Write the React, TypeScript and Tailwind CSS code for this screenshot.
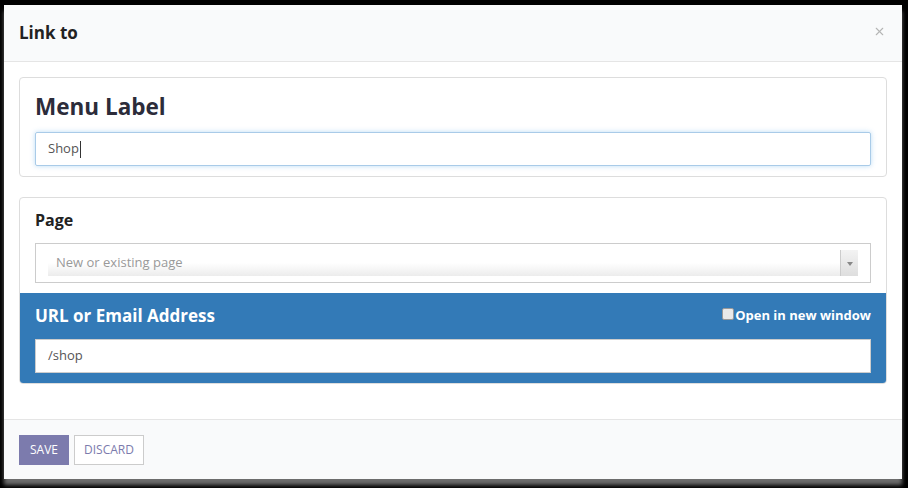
import { X } from "lucide-react";

export default function App() {
  return (
    <div
      className="h-[488px] w-[908px] overflow-hidden bg-black pl-[4px] pt-[5px]"
      style={{ fontFamily: "'Open Sans', 'Noto Sans', sans-serif" }}
    >
      <div className="w-[898px] bg-white shadow-[0_6px_4px_rgba(120,120,120,0.9)]">
        {/* Header */}
        <div className="flex h-[57px] items-center justify-between border-b border-[#e5e5e5] bg-[#f9fafb] pl-[15px] pr-[16px]">
          <h4 className="text-[17px] font-bold text-[#222]">Link to</h4>
          <X className="mb-[3px] size-[13px] text-[#b5b5b5]" strokeWidth={2} />
        </div>

        {/* Body */}
        <div className="space-y-[20px] px-[15px] pb-[35px] pt-[15px]">
          <div className="rounded-[4px] border border-[#ddd] px-[15px] pb-[10px] pt-[14px]">
            <h3 className="mb-[10px] text-[22.5px] font-bold leading-[30px] text-[#2c2c3a]">Menu Label</h3>
            <div className="flex h-[34px] items-center rounded-[2px] border border-[#a9cbe8] px-[12px] text-[13px] text-[#555] shadow-[0_0_5px_rgba(102,175,233,0.45)]">
              Shop<span className="ml-[1px] h-[17px] w-px bg-[#333]" />
            </div>
          </div>

          <div className="overflow-hidden rounded-[4px] border border-[#ddd]">
            <div className="px-[15px] pb-[10px] pt-[10px]">
              <h4 className="mb-[11px] text-[16px] font-bold leading-[24px] text-[#222]">Page</h4>
              <div className="flex h-[40px] items-center border border-[#ccc] px-[12px]">
                <div className="flex h-[26px] flex-1 items-center justify-between bg-gradient-to-b from-white via-white to-[#ececec]">
                  <span className="pl-[8px] text-[13px] text-[#999]">New or existing page</span>
                  <span className="flex h-[26px] w-[18px] items-center justify-center border-l border-[#ccc] bg-gradient-to-b from-[#f3f3f3] to-[#dedede]">
                    <span className="mt-[1px] size-0 border-x-[3px] border-t-[4px] border-x-transparent border-t-[#888]" />
                  </span>
                </div>
              </div>
            </div>
            <div className="bg-[#337ab7] px-[15px] pb-[10px] pt-[10px]">
              <div className="mb-[10px] flex items-center justify-between">
                <h4 className="text-[17px] font-bold leading-[26px] text-white">URL or Email Address</h4>
                <label className="flex items-center text-[13px] font-bold text-white">
                  <span className="mb-[4px] mr-[1px] size-[12px] rounded-[2px] border border-[#999] bg-[#e9e9e9]" />
                  Open in new window
                </label>
              </div>
              <div className="flex h-[34px] items-center border border-[#ccc] bg-white px-[12px] text-[13px] text-[#555]">
                /shop
              </div>
            </div>
          </div>
        </div>

        {/* Footer */}
        <div className="flex h-[60px] items-center gap-[5px] border-t border-[#e5e5e5] bg-[#f9fafb] px-[15px]">
          <button className="h-[30px] bg-[#7c7bad] px-[11px] text-[12px] text-white">SAVE</button>
          <button className="h-[30px] border border-[#ccc] bg-white px-[9px] text-[12px] text-[#7c7bad]">DISCARD</button>
        </div>
      </div>
    </div>
  );
}
